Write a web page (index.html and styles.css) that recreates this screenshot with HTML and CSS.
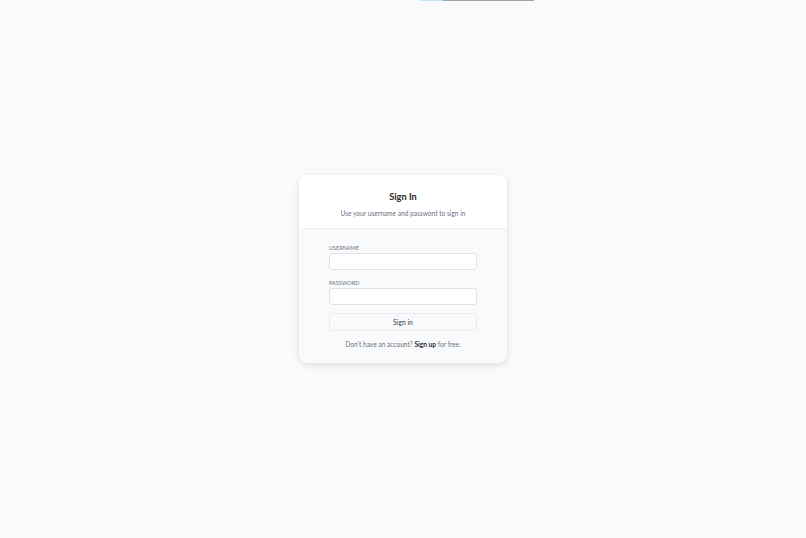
FILE: index.html
```html
<!DOCTYPE html>
<html lang="en">
<head>
<meta charset="utf-8">
<title>Sign In</title>
<link rel="stylesheet" href="styles.css">
</head>
<body>
<div class="topbar"><div class="progress"><span class="progress-fill"></span></div></div>
<main class="page">
  <div class="card">
    <div class="card-header">
      <h1 class="title">Sign In</h1>
      <p class="subtitle">Use your username and password to sign in</p>
    </div>
    <form class="card-body">
      <label class="field">
        <span class="label">USERNAME</span>
        <input class="input" type="text">
      </label>
      <label class="field">
        <span class="label">PASSWORD</span>
        <input class="input" type="password">
      </label>
      <button class="btn" type="button">Sign in</button>
      <p class="footer">Don't have an account? <a class="link" href="#">Sign up</a> for free.</p>
    </form>
  </div>
</main>
</body>
</html>
```
FILE: styles.css
```css
* { box-sizing: border-box; }
html, body { margin: 0; height: 100%; }
body {
  background: #f8fafc;
  font-family: Lato, "Open Sans", Arial, sans-serif;
  color: #374151;
  position: relative;
}
.topbar {
  position: absolute;
  top: 0; left: 0; right: 0;
  display: flex;
  padding-left: 421px;
}
.progress {
  width: 113px;
  height: 1px;
  background: #a3a3a3;
  display: flex;
}
.progress-fill {
  width: 22px;
  background: #bfe3f5;
}
.page {
  height: 100%;
  display: flex;
  align-items: center;
  justify-content: center;
}
.card {
  width: 208px;
  background: #f9fafb;
  border-radius: 8px;
  box-shadow: 0 2px 6px rgba(0,0,0,0.12), 0 0 1px rgba(0,0,0,0.06);
  overflow: hidden;
}
.card-header {
  background: #fff;
  text-align: center;
  padding: 15px 10px 10px;
  border-bottom: 1px solid #eef0f3;
}
.title {
  margin: 0;
  font-size: 9.2px;
  font-weight: 700;
  color: #2b2b2b;
  line-height: 14px;
}
.subtitle {
  margin: 4px 0 0;
  font-size: 6.6px;
  color: #6b7280;
  line-height: 10px;
}
.card-body {
  margin: 0;
  padding: 15px 30px 14px;
  display: flex;
  flex-direction: column;
}
.field {
  display: flex;
  flex-direction: column;
}
.field + .field { margin-top: 9px; }
.label {
  font-size: 5.5px;
  color: #6b7280;
  line-height: 8px;
  margin-bottom: 1px;
}
.input {
  height: 17px;
  border: 1px solid #dfe3e8;
  border-radius: 3px;
  background: #fff;
  font: inherit;
  font-size: 7px;
  padding: 0 4px;
}
.btn {
  height: 18px;
  border: 1px solid #e8ebef;
  border-radius: 3px;
  background: #f9fafb;
  font-family: inherit;
  font-size: 6.8px;
  color: #374151;
  margin-top: 8px;
  padding: 0;
}
.footer {
  margin: 8px 0 0;
  text-align: center;
  font-size: 6.6px;
  color: #6b7280;
  line-height: 10px;
}
.link {
  color: #2b2b2b;
  font-weight: 700;
  text-decoration: none;
}
```
